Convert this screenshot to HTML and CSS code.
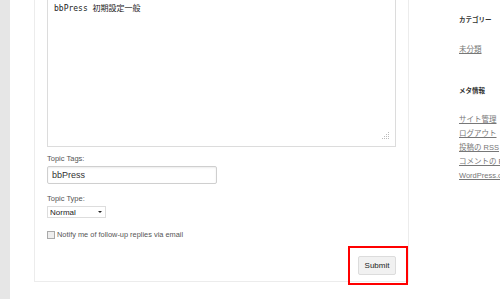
FILE: index.html
```html
<!DOCTYPE html>
<html lang="ja">

<head>
  <meta charset="UTF-8">
  <meta name="viewport" content="width=device-width, initial-scale=1.0">
  <title>新規トピック</title>
  <link rel="stylesheet" href="styles.css">
</head>

<body>

  <div class="strip"></div>

  <div class="main">
    <div class="panel">
      <div class="editor">
        <textarea class="content">bbPress 初期設定一般</textarea>
        <svg class="grip" width="8" height="8" viewBox="0 0 8 8">
          <rect x="6" y="0" width="1" height="1" fill="#bbb" />
          <rect x="4" y="2" width="1" height="1" fill="#bbb" />
          <rect x="6" y="2" width="1" height="1" fill="#bbb" />
          <rect x="2" y="4" width="1" height="1" fill="#bbb" />
          <rect x="4" y="4" width="1" height="1" fill="#bbb" />
          <rect x="6" y="4" width="1" height="1" fill="#bbb" />
          <rect x="0" y="6" width="1" height="1" fill="#bbb" />
          <rect x="2" y="6" width="1" height="1" fill="#bbb" />
          <rect x="4" y="6" width="1" height="1" fill="#bbb" />
          <rect x="6" y="6" width="1" height="1" fill="#bbb" />
        </svg>
      </div>

      <label class="field-label" for="tags">Topic Tags:</label>
      <input type="text" id="tags" class="tags" value="bbPress">

      <label class="field-label type-label" for="type">Topic Type:</label>
      <div class="select">
        <span>Normal</span>
        <span class="arrow"></span>
      </div>

      <div class="notify">
        <span class="check"></span>
        <span>Notify me of follow-up replies via email</span>
      </div>

      <div class="actions">
        <div class="marked">
          <button class="submit">Submit</button>
        </div>
      </div>
    </div>
  </div>

  <div class="sidebar">
    <h3>カテゴリー</h3>
    <ul class="cats">
      <li><a href="#">未分類</a></li>
    </ul>
    <h3>メタ情報</h3>
    <ul class="meta">
      <li><a href="#">サイト管理</a></li>
      <li><a href="#">ログアウト</a></li>
      <li><a href="#">投稿の RSS</a></li>
      <li><a href="#">コメントの RSS</a></li>
      <li><a href="#">WordPress.org</a></li>
    </ul>
  </div>

</body>

</html>
```

FILE: styles.css
```css
html,
body {
  height: 100%;
}

body {
  margin: 0;
  display: flex;
  overflow: hidden;
  background: #fff;
  font-family: "Liberation Sans", Arial, "Noto Sans CJK JP", sans-serif;
  color: #555;
}

.strip {
  width: 10px;
  flex-shrink: 0;
  background-color: #e6e6e6;
}

.main {
  margin-left: 24px;
  width: 375px;
  flex-shrink: 0;
}

.panel {
  margin-top: -20px;
  padding: 0 12px 6px;
  border: 1px solid #ececec;
  border-top: none;
}

/* 本文エリア */
.editor {
  position: relative;
}

.content {
  display: block;
  box-sizing: border-box;
  width: 100%;
  height: 167px;
  margin: 0;
  padding: 22px 6px 0;
  border: 1px solid #dcdcdc;
  resize: none;
  font-family: "DejaVu Sans Mono", "Noto Sans CJK JP", monospace;
  font-size: 8px;
  line-height: 12px;
  color: #222;
  background: #fff;
}

.grip {
  position: absolute;
  right: 6px;
  bottom: 7px;
}

.field-label {
  display: block;
  margin-top: 7px;
  font-size: 7.5px;
  line-height: 10px;
  color: #555;
}

.type-label {
  margin-top: 10px;
}

.tags {
  display: block;
  box-sizing: border-box;
  width: 170px;
  height: 18px;
  margin: 2px 0 0;
  padding: 0 4px;
  border: 1px solid #cfcfcf;
  border-radius: 2px;
  box-shadow: inset 0 1px 2px rgba(0, 0, 0, 0.08);
  font-family: "Liberation Sans", Arial, sans-serif;
  font-size: 9px;
  color: #333;
}

.select {
  display: flex;
  align-items: center;
  justify-content: space-between;
  box-sizing: border-box;
  width: 59px;
  height: 12px;
  margin-top: 2px;
  padding: 0 3px 0 2px;
  border: 1px solid #ddd;
  font-size: 8px;
  color: #222;
}

.arrow {
  width: 0;
  height: 0;
  border-left: 2px solid transparent;
  border-right: 2px solid transparent;
  border-top: 2px solid #222;
}

.notify {
  display: flex;
  align-items: center;
  gap: 2px;
  margin-top: 12px;
  font-size: 7.4px;
  line-height: 9px;
  color: #555;
}

.check {
  box-sizing: border-box;
  width: 8px;
  height: 8px;
  border: 1px solid #aaa;
  background: #eee;
}

.actions {
  display: flex;
  justify-content: flex-end;
  margin-top: 17px;
}

.marked {
  position: relative;
}

.marked::after {
  content: "";
  position: absolute;
  top: -10px;
  left: -10px;
  right: -12px;
  bottom: -10px;
  border: 2px solid #f00;
}

.submit {
  display: block;
  box-sizing: border-box;
  width: 38px;
  height: 19px;
  padding: 0;
  border: 1px solid #dcdcdc;
  border-radius: 2px;
  background-color: #f1f1f1;
  font-family: "Liberation Sans", Arial, sans-serif;
  font-size: 8px;
  color: #222;
}

/* サイドバー */
.sidebar {
  margin-left: 50px;
  padding-top: 15px;
  white-space: nowrap;
}

.sidebar h3 {
  margin: 0;
  font-size: 6.5px;
  line-height: 8px;
  font-weight: bold;
  color: #333;
  font-family: "Noto Sans CJK JP", sans-serif;
}

.sidebar ul {
  list-style: none;
  margin: 0;
  padding: 0;
}

.cats {
  margin-top: 20px !important;
  margin-bottom: 29px !important;
}

.meta {
  margin-top: 19px !important;
}

.sidebar li {
  font-size: 7.5px;
  line-height: 14px;
}

.sidebar a {
  color: #777;
  text-decoration: underline;
}
```
